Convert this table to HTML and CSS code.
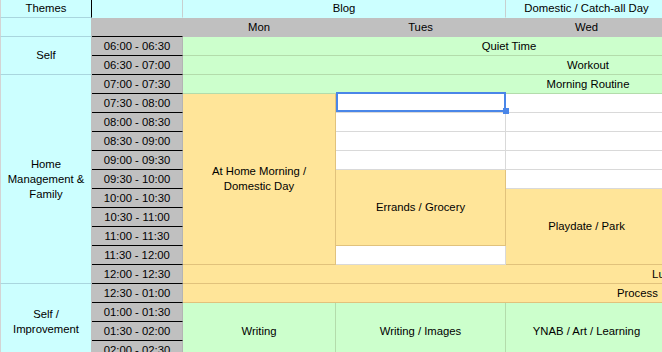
FILE: index.html
```html
<!DOCTYPE html>
<html>
<head>
<meta charset="utf-8">
<link rel="stylesheet" href="styles.css">
</head>
<body>
<div class="sheet">
  <!-- row 1 -->
  <div class="c cy a-head">Themes</div>
  <div class="c cyh b-head"></div>
  <div class="c cyh s2">Blog</div>
  <div class="c cyh">Domestic / Catch-all Day</div>
  <div class="c cyh s3"></div>
  <!-- row 2 -->
  <div class="c cy a-col"></div>
  <div class="c gr tb"></div>
  <div class="c gr">Mon</div>
  <div class="c gr">Tues</div>
  <div class="c gr">Wed</div>
  <div class="c gr s3"></div>
  <!-- row 3 -->
  <div class="c cy a-col r2">Self</div>
  <div class="c tm">06:00 - 06:30</div>
  <div class="c gn s4">Quiet Time</div>
  <div class="c gn s2"></div>
  <!-- row 4 -->
  <div class="c tm">06:30 - 07:00</div>
  <div class="c gn s5">Workout</div>
  <div class="c gn"></div>
  <!-- row 5 -->
  <div class="c cy a-col r11">Home Management &amp; Family</div>
  <div class="c tm">07:00 - 07:30</div>
  <div class="c gn s5">Morning Routine</div>
  <div class="c gn"></div>
  <!-- row 6 -->
  <div class="c tm">07:30 - 08:00</div>
  <div class="c or r9 wide">At Home Morning / Domestic Day</div>
  <div class="c wh sel"></div>
  <div class="c wh"></div>
  <div class="c wh s3"></div>
  <!-- row 7 -->
  <div class="c tm">08:00 - 08:30</div>
  <div class="c wh"></div>
  <div class="c wh"></div>
  <div class="c wh s3"></div>
  <!-- row 8 -->
  <div class="c tm">08:30 - 09:00</div>
  <div class="c wh"></div>
  <div class="c wh"></div>
  <div class="c wh s3"></div>
  <!-- row 9 -->
  <div class="c tm">09:00 - 09:30</div>
  <div class="c wh"></div>
  <div class="c wh"></div>
  <div class="c wh s3"></div>
  <!-- row 10 -->
  <div class="c tm">09:30 - 10:00</div>
  <div class="c or r4">Errands / Grocery</div>
  <div class="c wh"></div>
  <div class="c wh s3"></div>
  <!-- row 11 -->
  <div class="c tm">10:00 - 10:30</div>
  <div class="c or r4">Playdate / Park</div>
  <div class="c wh s3"></div>
  <!-- row 12 -->
  <div class="c tm">10:30 - 11:00</div>
  <div class="c wh s3"></div>
  <!-- row 13 -->
  <div class="c tm">11:00 - 11:30</div>
  <div class="c wh s3"></div>
  <!-- row 14 -->
  <div class="c tm">11:30 - 12:00</div>
  <div class="c wh"></div>
  <div class="c wh s3"></div>
  <!-- row 15 -->
  <div class="c tm">12:00 - 12:30</div>
  <div class="c or s6">Lunch</div>
  <!-- row 16 -->
  <div class="c cy a-col r4">Self / Improvement</div>
  <div class="c tm">12:30 - 01:00</div>
  <div class="c or s6 process">Process</div>
  <!-- row 17 -->
  <div class="c tm">01:00 - 01:30</div>
  <div class="c gn r3">Writing</div>
  <div class="c gn r3">Writing / Images</div>
  <div class="c gn r3">YNAB / Art / Learning</div>
  <div class="c gn s3 r3"></div>
  <!-- row 18 -->
  <div class="c tm">01:30 - 02:00</div>
  <!-- row 19 -->
  <div class="c tm">02:00 - 02:30</div>
</div>
</body>
</html>
```
FILE: styles.css
```css
html, body {
  margin: 0;
  padding: 0;
  background: #ffffff;
  overflow: hidden;
}

body {
  font-family: "Liberation Sans", Arial, sans-serif;
  font-size: 11.3px;
  color: #000;
}

.sheet {
  display: grid;
  grid-template-columns: 92px 91px 153px 170px 162px 168px 158px 159px;
  grid-template-rows: 18px repeat(18, 19px);
  width: 1153px;
}

.c {
  box-sizing: border-box;
  display: flex;
  align-items: center;
  justify-content: center;
  text-align: center;
  line-height: 15px;
  border-right: 1px solid transparent;
  border-bottom: 1px solid transparent;
  white-space: normal;
  overflow: hidden;
}

.s2 { grid-column: span 2; }
.s3 { grid-column: span 3; }
.s4 { grid-column: span 4; }
.s5 { grid-column: span 5; }
.s6 { grid-column: span 6; }
.r2 { grid-row: span 2; }
.r3 { grid-row: span 3; }
.r4 { grid-row: span 4; }
.r9 { grid-row: span 9; }
.r11 { grid-row: span 11; }

/* theme column */
.cy {
  background: #ccffff;
  border-bottom-color: #a9d6de;
  border-right-color: #c0c0c0;
  border-left: 1px solid #d4d4d4;
  padding: 0 3px;
}
.a-head {
  border-right-color: #000;
}

/* header cyan cells */
.cyh {
  background: #ccffff;
  border-right-color: #c8cfcf;
  border-bottom-color: #ccffff;
}

/* grey day row */
.gr {
  background: #c0c0c0;
  border-right-color: #c0c0c0;
  border-bottom-color: #c0c0c0;
}
.gr.tb {
  border-bottom-color: #000;
}

/* time column */
.tm {
  background: #c0c0c0;
  border-bottom-color: #000;
  border-right-color: #b4b4b4;
}

/* green */
.gn {
  background: #ccffcc;
  border-right-color: #b3dcab;
  border-bottom-color: #b3dcab;
}

/* orange */
.or {
  background: #ffe599;
  border-right-color: #e1c27c;
  border-bottom-color: #e1c27c;
}
.or.wide {
  padding: 0 10px;
}
.or.process {
  justify-content: flex-start;
  padding-left: 434px;
}

/* white */
.wh {
  background: #ffffff;
  border-right-color: #d9d9d9;
  border-bottom-color: #d9d9d9;
}

/* selected cell */
.sel {
  position: relative;
  overflow: visible;
}
.sel::before {
  content: "";
  position: absolute;
  left: 0;
  top: -2px;
  right: -1px;
  bottom: 0;
  border: 2px solid #4a86e8;
  box-sizing: border-box;
  z-index: 2;
}
.sel::after {
  content: "";
  position: absolute;
  left: 167px;
  top: 14px;
  width: 6px;
  height: 6px;
  background: #4a86e8;
  z-index: 3;
}
```
